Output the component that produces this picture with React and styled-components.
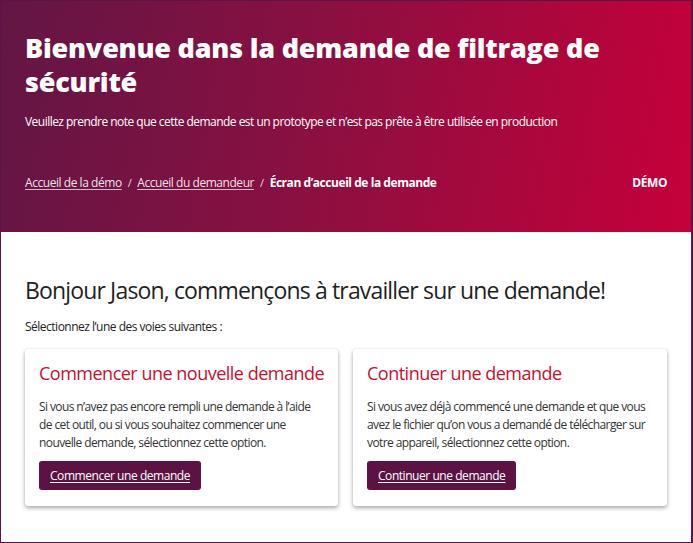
import styled, { createGlobalStyle } from 'styled-components'

const GlobalStyle = createGlobalStyle`
    html, body {
        margin: 0;
        padding: 0;
        background: #ffffff;
    }
    * {
        box-sizing: border-box;
    }
`

const Frame = styled.div`
    width: 693px;
    height: 543px;
    border: 1px solid #5a1546;
    border-right-width: 2px;
    font-family: "Open Sans", "Noto Sans", sans-serif;
    color: #222;
    overflow: hidden;
`

const Banner = styled.header`
    height: 231px;
    padding: 30px 24px 0 24px;
    background: linear-gradient(100deg, #621645 0%, #8a1040 45%, #c6003a 100%);
    color: #fff;
    display: flex;
    flex-direction: column;
`

const Title = styled.h1`
    margin: 0;
    font-size: 27px;
    line-height: 34px;
    font-weight: 800;
    letter-spacing: -0.22px;
    max-width: 610px;
`

const Notice = styled.p`
    margin: 14px 0 0 0;
    font-size: 12px;
    line-height: 18px;
    letter-spacing: -0.53px;
`

const CrumbBar = styled.nav`
    margin-top: 43px;
    display: flex;
    align-items: center;
    justify-content: space-between;
    font-size: 12px;
    line-height: 18px;
    letter-spacing: -0.45px;
`

const Crumbs = styled.div`
    display: flex;
    align-items: center;
    gap: 6px;
`

const CrumbLink = styled.a`
    color: rgba(255, 255, 255, 0.9);
    text-decoration: underline;
    text-underline-offset: 2px;
    text-decoration-color: rgba(255, 255, 255, 0.7);
`

const Separator = styled.span`
    color: rgba(255, 255, 255, 0.85);
    font-size: 11px;
`

const Current = styled.span`
    font-weight: 700;
`

const DemoTag = styled.span`
    font-weight: 700;
`

const Main = styled.main`
    padding: 42px 24px 0 24px;
`

const Greeting = styled.h2`
    margin: 0;
    font-size: 23px;
    line-height: 32px;
    font-weight: 400;
    letter-spacing: -0.85px;
    color: #1f1f1f;
`

const Lead = styled.p`
    margin: 12px 0 0 0;
    font-size: 12px;
    line-height: 18px;
    letter-spacing: -0.5px;
    color: #222;
`

const CardGrid = styled.div`
    margin-top: 13px;
    display: grid;
    grid-template-columns: 313px 314px;
    gap: 15px;
`

const Card = styled.section`
    background: #fff;
    border-radius: 3px;
    box-shadow: 0 2px 4px rgba(0, 0, 0, 0.35), 0 0 1px rgba(0, 0, 0, 0.15);
    padding: 11px 14px 16px 14px;
    display: flex;
    flex-direction: column;
    align-items: flex-start;
`

const CardTitle = styled.h3`
    margin: 0;
    font-size: 18px;
    line-height: 26px;
    font-weight: 400;
    letter-spacing: -0.5px;
    color: #c8102e;
    white-space: nowrap;
`

const CardText = styled.p`
    margin: 12px 0 0 0;
    font-size: 12px;
    line-height: 18px;
    letter-spacing: -0.6px;
    color: #333;
`

const ActionButton = styled.button`
    margin-top: 9px;
    height: 29px;
    padding: 0 11px;
    border: none;
    border-radius: 3px;
    background: #5c1344;
    color: #fff;
    font-family: inherit;
    font-size: 12px;
    letter-spacing: -0.45px;
    text-decoration: underline;
    text-underline-offset: 2px;
    cursor: pointer;
`

const paths = [
    {
        title: `Commencer une nouvelle demande`,
        text: `Si vous n’avez pas encore rempli une demande à l’aide de cet outil, ou si vous souhaitez commencer une nouvelle demande, sélectionnez cette option.`,
        action: `Commencer une demande`,
    },
    {
        title: `Continuer une demande`,
        text: `Si vous avez déjà commencé une demande et que vous avez le fichier qu’on vous a demandé de télécharger sur votre appareil, sélectionnez cette option.`,
        action: `Continuer une demande`,
    },
]

export default function App() {

    return <>
        <GlobalStyle />
        <Frame>

            <Banner>
                <Title>Bienvenue dans la demande de filtrage de sécurité</Title>
                <Notice>Veuillez prendre note que cette demande est un prototype et n’est pas prête à être utilisée en production</Notice>
                <CrumbBar>
                    <Crumbs>
                        <CrumbLink href="#">Accueil de la démo</CrumbLink>
                        <Separator>/</Separator>
                        <CrumbLink href="#">Accueil du demandeur</CrumbLink>
                        <Separator>/</Separator>
                        <Current>Écran d’accueil de la demande</Current>
                    </Crumbs>
                    <DemoTag>DÉMO</DemoTag>
                </CrumbBar>
            </Banner>

            <Main>
                <Greeting>Bonjour Jason, commençons à travailler sur une demande!</Greeting>
                <Lead>Sélectionnez l’une des voies suivantes :</Lead>
                <CardGrid>
                    { paths.map( p => <Card key={ p.title }>
                        <CardTitle>{ p.title }</CardTitle>
                        <CardText>{ p.text }</CardText>
                        <ActionButton>{ p.action }</ActionButton>
                    </Card> ) }
                </CardGrid>
            </Main>

        </Frame>
    </>

}
